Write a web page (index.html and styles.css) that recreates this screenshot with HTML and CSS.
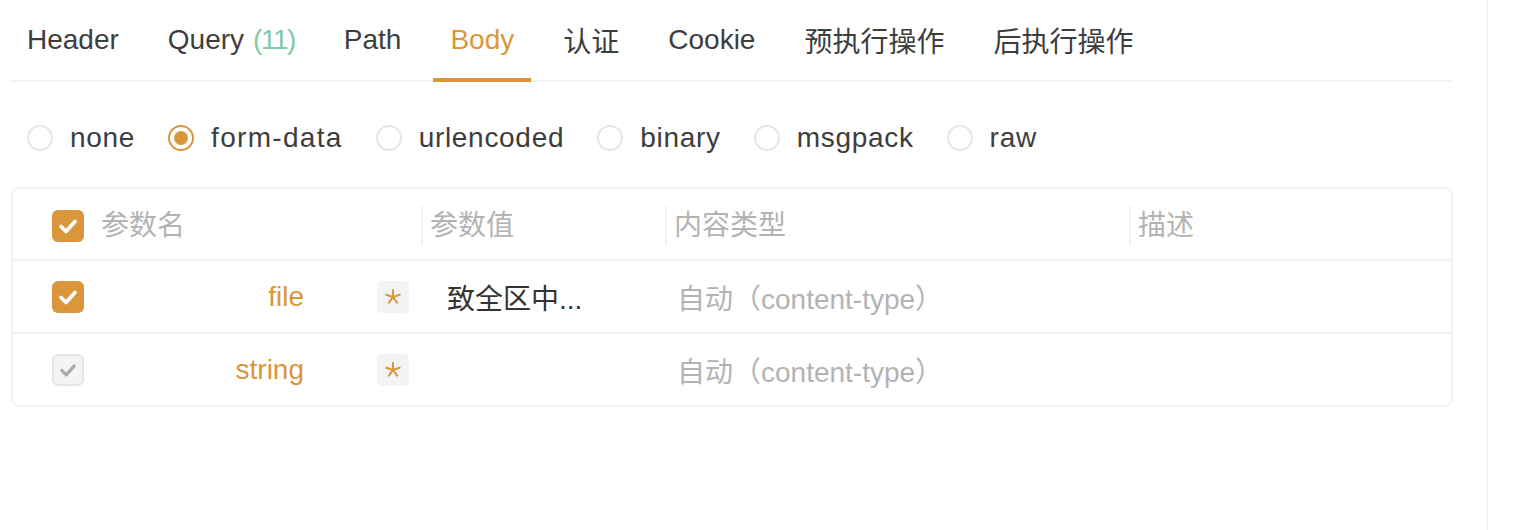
FILE: index.html
```html
<!DOCTYPE html>
<html lang="zh">
<head>
<meta charset="utf-8">
<title>Body</title>
<link rel="stylesheet" href="styles.css">
</head>
<body>
<div class="panel">
  <nav class="tabs">
    <div class="tab">Header</div>
    <div class="tab">Query<span class="count">(11)</span></div>
    <div class="tab">Path</div>
    <div class="tab active">Body</div>
    <div class="tab">认证</div>
    <div class="tab">Cookie</div>
    <div class="tab">预执行操作</div>
    <div class="tab">后执行操作</div>
  </nav>

  <div class="radios">
    <label class="radio"><span class="dot"></span>none</label>
    <label class="radio wide"><span class="dot on"></span>form-data</label>
    <label class="radio"><span class="dot"></span>urlencoded</label>
    <label class="radio"><span class="dot"></span>binary</label>
    <label class="radio"><span class="dot"></span>msgpack</label>
    <label class="radio"><span class="dot"></span>raw</label>
  </div>

  <div class="table">
    <div class="row head">
      <div class="cell c1">
        <span class="check on"><svg viewBox="0 0 32 32"><path d="M9 16.5l5 5 9-10" /></svg></span>
        <span class="hlabel first">参数名</span>
      </div>
      <div class="cell"><span class="hlabel">参数值</span></div>
      <div class="cell"><span class="hlabel">内容类型</span></div>
      <div class="cell"><span class="hlabel">描述</span></div>
    </div>
    <div class="row">
      <div class="cell c1">
        <span class="check on"><svg viewBox="0 0 32 32"><path d="M9 16.5l5 5 9-10" /></svg></span>
        <span class="name">file</span>
        <span class="req"><svg viewBox="0 0 32 32"><path d="M16 9v7M16 16l6.7-2.2M16 16l-6.7-2.2M16 16l4.1 5.7M16 16l-4.1 5.7" /></svg></span>
      </div>
      <div class="cell val">致全区中...</div>
      <div class="cell ctype">自动（content-type）</div>
      <div class="cell"></div>
    </div>
    <div class="row last">
      <div class="cell c1">
        <span class="check off"><svg viewBox="0 0 32 32"><path d="M9 16.5l5 5 9-10" /></svg></span>
        <span class="name">string</span>
        <span class="req"><svg viewBox="0 0 32 32"><path d="M16 9v7M16 16l6.7-2.2M16 16l-6.7-2.2M16 16l4.1 5.7M16 16l-4.1 5.7" /></svg></span>
      </div>
      <div class="cell val"></div>
      <div class="cell ctype">自动（content-type）</div>
      <div class="cell"></div>
    </div>
  </div>
</div>
</body>
</html>
```

FILE: styles.css
```css
* { box-sizing: border-box; }
html, body { margin: 0; padding: 0; background: #fff; }
body {
  font-family: "Liberation Sans", "Noto Sans CJK SC", sans-serif;
  font-size: 28px;
  color: #3d3d3d;
}
.panel {
  width: 1488px;
  height: 530px;
  border-right: 2px solid #f2f2f2;
  padding: 0 33px 0 10px;
}
.tabs {
  display: flex;
  gap: 15px;
  height: 82px;
  border-bottom: 2px solid #f2f2f2;
}
.tab {
  position: relative;
  height: 80px;
  padding: 0 17px;
  display: flex;
  align-items: center;
  color: #3d3d3d;
  white-space: nowrap;
}
.tab .count { color: #82c9a3; margin-left: 9px; letter-spacing: -1.5px; }
.tab.active { color: #d9963b; }
.tab.active::after {
  content: "";
  position: absolute;
  left: 0; right: 0; bottom: -2px;
  height: 4px;
  background: #d9963b;
}
.radios {
  display: flex;
  align-items: center;
  gap: 33px;
  height: 40px;
  margin-top: 36px;
  padding-left: 17px;
}
.radio {
  display: flex;
  align-items: center;
  gap: 17px;
  color: #3d3d3d;
  letter-spacing: 0.7px;
}
.radio.wide { letter-spacing: 1.3px; }
.dot {
  width: 26px; height: 26px;
  border-radius: 50%;
  border: 2px solid #e6e6e6;
  display: flex; align-items: center; justify-content: center;
}
.dot.on { border-color: #d9963b; }
.dot.on::before {
  content: "";
  width: 14px; height: 14px;
  border-radius: 50%;
  background: #d9963b;
}
.table {
  margin-top: 29px;
  margin-left: 1px;
  width: 1442px;
  border: 2px solid #f2f2f2;
  border-radius: 8px;
}
.row {
  display: grid;
  grid-template-columns: 408px 244px 464px 1fr;
  height: 73px;
  border-bottom: 2px solid #f2f2f2;
}
.row.head { height: 72px; padding-top: 3px; }
.row.last { border-bottom: none; height: 71px; }
.cell {
  display: flex;
  align-items: center;
  min-width: 0;
}
.c1 { padding-left: 39px; padding-right: 12px; }
.hlabel {
  height: 40px;
  line-height: 40px;
  border-left: 2px solid #f2f2f2;
  padding-left: 7px;
  color: #b3b3b3;
}
.hlabel.first { border-left: none; padding-left: 0; margin-left: 17px; }
.check {
  width: 32px; height: 32px;
  border-radius: 6px;
  flex: none;
  display: flex; align-items: center; justify-content: center;
}
.check svg { width: 32px; height: 32px; fill: none; stroke-width: 3.8; stroke-linecap: round; stroke-linejoin: round; }
.check.on { background: #d9963b; }
.check.on svg { stroke: #fff; }
.check.off { background: #f4f4f4; border: 2px solid #e6e6e6; }
.check.off svg { stroke: #a9a9a9; width: 28px; height: 28px; }
.name {
  flex: 1;
  text-align: right;
  color: #d9963b;
  margin-right: 73px;
}
.req {
  width: 32px; height: 32px;
  flex: none;
  border-radius: 5px;
  background: #f2f3f5;
  display: flex; align-items: center; justify-content: center;
}
.req svg { width: 32px; height: 32px; fill: none; stroke: #d9963b; stroke-width: 2; stroke-linecap: round; }
.val { padding-left: 26px; color: #333; }
.ctype { padding-left: 12px; color: #b3b3b3; white-space: nowrap; }
```
